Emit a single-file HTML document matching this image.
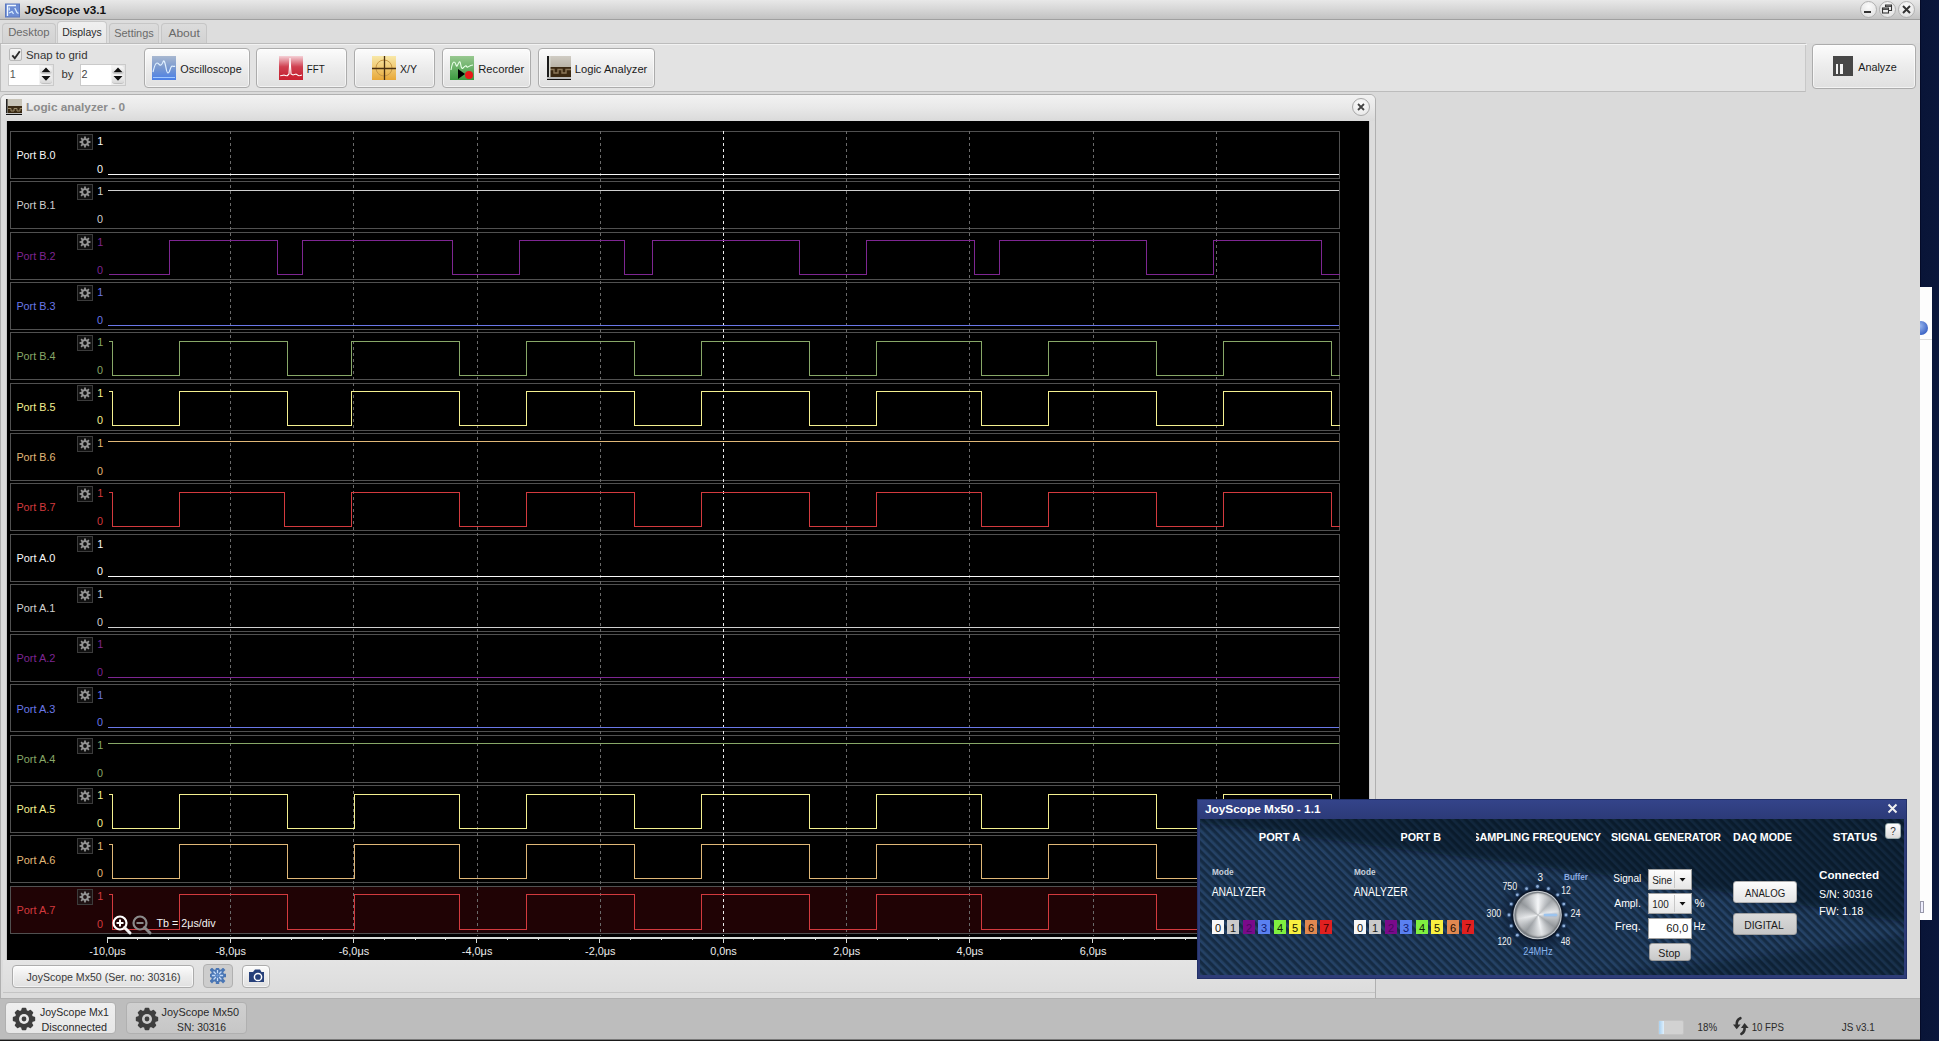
<!DOCTYPE html>
<html><head><meta charset="utf-8">
<style>
*{margin:0;padding:0;box-sizing:border-box}
html,body{width:1939px;height:1041px;overflow:hidden;position:relative;background:#0a1038;font-family:"Liberation Sans",sans-serif;font-size:12px;color:#222}
.a{position:absolute}
.btn{position:absolute;border:1px solid #acacac;border-radius:4px;background:linear-gradient(#fcfcfc,#ececec 50%,#e0e0e0);box-shadow:inset 0 0 0 1px rgba(255,255,255,0.6)}
.tab{position:absolute;border:1px solid #c6c6c6;border-bottom:none;border-radius:4px 4px 0 0;background:linear-gradient(#dcdcdc,#d2d2d2)}
.spin{position:absolute;background:#fff;border:1px solid #cacaca}
svg text{font-family:"Liberation Sans",sans-serif}
</style></head><body>
<div class="a" style="left:1920px;top:0;width:19px;height:1041px;background:linear-gradient(90deg,#020620 0px,#091538 1.5px,#0a1639 60%,#0b173c)"></div>
<div class="a" style="left:1920px;top:287px;width:12px;height:633px;background:#fdfdfd"></div>
<div class="a" style="left:1920px;top:339px;width:12px;height:1px;background:#dcdcdc"></div>
<div class="a" style="left:1914px;top:321px;width:14px;height:14px;border-radius:50%;background:radial-gradient(circle at 40% 35%,#9ab8f0,#3a62c4 75%)"></div>
<div class="a" style="left:1920px;top:901px;width:4px;height:12px;border:1px solid #99a;background:#eef"></div>
<div class="a" style="left:0;top:0;width:1920px;height:1041px;background:#dadada"></div>
<div class="a" style="left:0;top:0;width:1920px;height:20px;background:linear-gradient(#e8e8e8,#d8d8d8 45%,#c2c2c2);border-bottom:1px solid #a0a0a0"></div>
<svg class="a" style="left:5px;top:3px" width="16" height="15"><rect x="0.5" y="1" width="14" height="13" fill="#6c8cd4"/><rect x="0.5" y="1" width="14" height="13" fill="none" stroke="#5a78c0" stroke-width="1"/><path d="M2.5 13V2.5H11" fill="none" stroke="#f0f8ff" stroke-width="1.3"/><path d="M4.2 4.5V7.5M4 10L7 8.5L8.5 11M9.8 5L12 9.5L13.5 10.5" fill="none" stroke="#d8ecff" stroke-width="1.3"/></svg>
<div class="a" style="left:1860px;top:1px;width:17px;height:17px;border-radius:50%;border:1px solid #b0b0b0;background:radial-gradient(circle at 50% 30%,#fbfbfb,#e6e6e6 70%,#d8d8d8)"></div>
<div class="a" style="left:1879px;top:1px;width:17px;height:17px;border-radius:50%;border:1px solid #b0b0b0;background:radial-gradient(circle at 50% 30%,#fbfbfb,#e6e6e6 70%,#d8d8d8)"></div>
<div class="a" style="left:1898px;top:1px;width:17px;height:17px;border-radius:50%;border:1px solid #b0b0b0;background:radial-gradient(circle at 50% 30%,#fbfbfb,#e6e6e6 70%,#d8d8d8)"></div>
<div class="a" style="left:1864px;top:11px;width:7px;height:2px;background:#333"></div>
<svg class="a" style="left:1881px;top:4px" width="12" height="10"><path d="M4.5 3V1H10.5V6.5H8" fill="none" stroke="#333" stroke-width="1.1"/><path d="M4.5 2.2H10.5" stroke="#333" stroke-width="1.3"/><rect x="1.5" y="4" width="6" height="5" fill="none" stroke="#333" stroke-width="1.1"/><path d="M1.5 5.2H7.5" stroke="#333" stroke-width="1.3"/></svg>
<svg class="a" style="left:1901px;top:4px" width="11" height="11"><path d="M2 2L9 9M9 2L2 9" stroke="#333" stroke-width="2"/></svg>
<div class="a" style="left:0;top:20px;width:1920px;height:23px;background:#dddddd"></div>
<div class="tab" style="left:2px;top:23px;width:54px;height:20px"></div>
<div class="tab" style="left:109px;top:23px;width:50px;height:20px"></div>
<div class="tab" style="left:161px;top:23px;width:46px;height:20px"></div>
<div class="tab" style="left:57px;top:21px;width:50px;height:23px;background:linear-gradient(#f0f0f0,#e6e6e6);border-color:#cacaca"></div>
<div class="a" style="left:0;top:43px;width:1806px;height:49px;background:#e3e3e3;border:1px solid #bcbcbc;border-right:1px solid #c8c8c8"></div>
<div class="a" style="left:1px;top:44px;width:1806px;height:1px;background:#f2f2f2"></div>
<div class="a" style="left:9px;top:48px;width:13px;height:13px;border:1px solid #b8b8b8;border-radius:2px;background:linear-gradient(#f6f6f6,#e2e2e2)"></div>
<svg class="a" style="left:10px;top:49px" width="12" height="12"><path d="M2.3 6.3L4.8 9.3L9.8 2.2" fill="none" stroke="#2a2a2a" stroke-width="1.9"/></svg>
<div class="spin" style="left:8px;top:64px;width:46px;height:22px"></div>
<div class="spin" style="left:80px;top:64px;width:46px;height:22px"></div>
<div class="a" style="left:39px;top:65px;width:14px;height:20px;background:linear-gradient(90deg,#f4f4f4,#e4e4e4)"></div>
<div class="a" style="left:40px;top:66px;width:12px;height:8px;border-radius:3px;background:linear-gradient(#fafafa,#dedede);border-bottom:1px solid #c8c8c8"></div>
<div class="a" style="left:40px;top:75px;width:12px;height:9px;border-radius:3px;background:linear-gradient(#f6f6f6,#d8d8d8);border-bottom:1px solid #c0c0c0"></div>
<svg class="a" style="left:39px;top:65px" width="14" height="20"><path d="M2.5 7.3L7 2.5L11.5 7.3Z M2.5 11L7 15.8L11.5 11Z" fill="#111"/></svg>
<div class="a" style="left:111px;top:65px;width:14px;height:20px;background:linear-gradient(90deg,#f4f4f4,#e4e4e4)"></div>
<div class="a" style="left:112px;top:66px;width:12px;height:8px;border-radius:3px;background:linear-gradient(#fafafa,#dedede);border-bottom:1px solid #c8c8c8"></div>
<div class="a" style="left:112px;top:75px;width:12px;height:9px;border-radius:3px;background:linear-gradient(#f6f6f6,#d8d8d8);border-bottom:1px solid #c0c0c0"></div>
<svg class="a" style="left:111px;top:65px" width="14" height="20"><path d="M2.5 7.3L7 2.5L11.5 7.3Z M2.5 11L7 15.8L11.5 11Z" fill="#111"/></svg>
<svg class="a" style="left:0px;top:0px;overflow:visible" width="1939" height="1041" font-family="Liberation Sans, sans-serif"><text x="24.5" y="13.8" font-size="11.5" fill="#111" font-weight="bold" textLength="81.5" lengthAdjust="spacingAndGlyphs" >JoyScope v3.1</text><text x="8.2" y="36.3" font-size="11.4" fill="#6a6a6a" textLength="41.4" lengthAdjust="spacingAndGlyphs" >Desktop</text><text x="62.2" y="35.7" font-size="11.4" fill="#2a2a2a" textLength="39.5" lengthAdjust="spacingAndGlyphs" >Displays</text><text x="114.2" y="37" font-size="11.4" fill="#6a6a6a" textLength="39.6" lengthAdjust="spacingAndGlyphs" >Settings</text><text x="168.4" y="37" font-size="11.4" fill="#6a6a6a" textLength="31.4" lengthAdjust="spacingAndGlyphs" >About</text><text x="26" y="58.8" font-size="10.8" fill="#333" textLength="61.5" lengthAdjust="spacingAndGlyphs" >Snap to grid</text><text x="9.8" y="77.8" font-size="10.8" fill="#555" >1</text><text x="81.6" y="77.8" font-size="10.8" fill="#444" >2</text><text x="61.5" y="77.8" font-size="10.8" fill="#333" textLength="12" lengthAdjust="spacingAndGlyphs" >by</text></svg>
<div class="btn" style="left:144px;top:48px;width:106px;height:40px"></div>
<svg class="a" style="left:152px;top:56px" width="24" height="24"><defs><linearGradient id="go" x1="0" y1="0" x2="0" y2="1"><stop offset="0" stop-color="#a8b8d0"/><stop offset="0.5" stop-color="#7898d0"/><stop offset="1" stop-color="#4a80e8"/></linearGradient></defs><rect width="24" height="24" fill="url(#go)"/><path d="M1 16 C2 12 3 7 5 7 C7 7 7 10 9 9 C11 8 11 4 12 5 C14 7 14 17 16 17 C18 17 18 11 20 10 C21 10 22 11 23 10" fill="none" stroke="#e0f0ff" stroke-width="1.2"/><rect x="1" y="21" width="22" height="1" fill="#a0c8ff"/></svg>
<div class="btn" style="left:256px;top:48px;width:91px;height:40px"></div>
<svg class="a" style="left:279px;top:56px" width="24" height="24"><defs><linearGradient id="gf" x1="0" y1="0" x2="0" y2="1"><stop offset="0" stop-color="#f4d0d6"/><stop offset="0.45" stop-color="#d04050"/><stop offset="1" stop-color="#c01828"/></linearGradient></defs><rect width="24" height="24" fill="url(#gf)"/><path d="M1 20 L5 19 L8 20 L10 18 L11 2 L12 18 L14 19 L17 18 L20 20 L23 19" fill="none" stroke="#fff" stroke-width="1.1"/><rect x="0" y="20" width="24" height="4" fill="#d02838" opacity="0.6"/></svg>
<div class="btn" style="left:354px;top:48px;width:81px;height:40px"></div>
<svg class="a" style="left:372px;top:56px" width="24" height="24"><defs><linearGradient id="gx" x1="0" y1="0" x2="0" y2="1"><stop offset="0" stop-color="#f8e8a8"/><stop offset="1" stop-color="#e8a838"/></linearGradient></defs><rect width="24" height="24" fill="url(#gx)"/><circle cx="12" cy="12" r="8" fill="none" stroke="#c89848" stroke-width="1"/><path d="M0 12.5H24M12.5 0V24" stroke="#4a3010" stroke-width="1.3"/></svg>
<div class="btn" style="left:442px;top:48px;width:89px;height:40px"></div>
<svg class="a" style="left:450px;top:56px" width="24" height="24"><defs><linearGradient id="gr" x1="0" y1="0" x2="0" y2="1"><stop offset="0" stop-color="#98c890"/><stop offset="1" stop-color="#3c9a40"/></linearGradient></defs><rect width="24" height="24" fill="url(#gr)"/><path d="M1 14 C2 8 3 6 4 6 C6 6 6 11 7 10 C8 9 9 5 10 6 C11 8 11 14 13 12 C15 10 16 9 17 11 C18 12 19 9 23 9" fill="none" stroke="#e8ffe8" stroke-width="1.1"/><path d="M8 13 L15 18 L8 23Z" fill="#000"/><circle cx="19" cy="19" r="4" fill="#e81818"/></svg>
<div class="btn" style="left:538px;top:48px;width:117px;height:40px"></div>
<svg class="a" style="left:547px;top:56px" width="24" height="24"><defs><linearGradient id="gl" x1="0" y1="0" x2="0" y2="1"><stop offset="0" stop-color="#d0ccc4"/><stop offset="1" stop-color="#a09888"/></linearGradient></defs><rect width="24" height="24" fill="url(#gl)"/><rect x="3" y="11" width="21" height="10" fill="#3a2812"/><path d="M3 13.5H7V17H11V13.5H15V17H19V13.5H24" fill="none" stroke="#8a7658" stroke-width="1.4"/><rect x="0" y="0" width="2" height="24" fill="#1a1a1a"/><rect x="2" y="0" width="1.5" height="21" fill="#d8d8d0"/><rect x="0" y="21" width="24" height="2" fill="#b8b8b8"/><rect x="0" y="23" width="24" height="1" fill="#101010"/></svg>
<div class="btn" style="left:1812px;top:44px;width:104px;height:45px"></div>
<div class="a" style="left:1833px;top:56px;width:20px;height:20px;background:#474747"></div>
<div class="a" style="left:1836px;top:64px;width:2px;height:10px;background:#f4f4f4"></div>
<div class="a" style="left:1840px;top:64px;width:3px;height:10px;background:#f4f4f4"></div>
<svg class="a" style="left:0px;top:0px;overflow:visible" width="1939" height="1041" font-family="Liberation Sans, sans-serif"><text x="180.2" y="73" font-size="11.4" fill="#1a1a1a" textLength="61.5" lengthAdjust="spacingAndGlyphs" >Oscilloscope</text><text x="306.8" y="73" font-size="11.4" fill="#1a1a1a" textLength="18" lengthAdjust="spacingAndGlyphs" >FFT</text><text x="400" y="73" font-size="11.4" fill="#1a1a1a" textLength="17" lengthAdjust="spacingAndGlyphs" >X/Y</text><text x="478.3" y="73" font-size="11.4" fill="#1a1a1a" textLength="46" lengthAdjust="spacingAndGlyphs" >Recorder</text><text x="574.8" y="73" font-size="11.4" fill="#1a1a1a" textLength="72.5" lengthAdjust="spacingAndGlyphs" >Logic Analyzer</text><text x="1858.2" y="70.6" font-size="11" fill="#1a1a1a" textLength="38.5" lengthAdjust="spacingAndGlyphs" >Analyze</text></svg>
<div class="a" style="left:0;top:94px;width:1376px;height:905px;background:#dcdcdc;border:1px solid #b0b0b0;border-radius:6px 6px 0 0"></div>
<div class="a" style="left:6px;top:121px;width:1px;height:872px;background:#c8c8c8"></div>
<div class="a" style="left:1369px;top:121px;width:1px;height:872px;background:#c8c8c8"></div>
<div class="a" style="left:1px;top:95px;width:1374px;height:26px;border-radius:5px 5px 0 0;background:linear-gradient(#f2f2f2,#e8e8e8 50%,#dadada)"></div>
<svg class="a" style="left:6px;top:99px" width="16" height="16"><rect width="16" height="16" fill="#b8b2a4"/><rect x="2" y="0" width="14" height="7" fill="#c8c4b8"/><rect x="2" y="7" width="14" height="7" fill="#3a2a14"/><path d="M2 9.5H5V12H8V9.5H11V12H14V9.5H16" fill="none" stroke="#9a8a6a" stroke-width="1"/><rect x="0" y="0" width="1.5" height="16" fill="#222"/><rect y="14" width="16" height="1" fill="#c0c0c0"/><rect y="15" width="16" height="1" fill="#111"/></svg>
<div class="a" style="left:1352px;top:98px;width:18px;height:18px;border-radius:50%;border:1px solid #a8a8a8;background:radial-gradient(circle at 50% 35%,#fdfdfd,#e4e4e4)"></div>
<svg class="a" style="left:1355px;top:101px" width="12" height="12"><path d="M3 3L9 9M9 3L3 9" stroke="#444" stroke-width="1.8"/></svg>
<div class="a" style="left:7px;top:121px;width:1362px;height:839px;background:#000"></div>
<svg class="a" style="left:0;top:0" width="1400" height="1000" shape-rendering="crispEdges">
<rect x="10.5" y="131.5" width="1329" height="47" fill="none" stroke="#505050" stroke-width="1"/>
<rect x="10.5" y="181.5" width="1329" height="47" fill="none" stroke="#505050" stroke-width="1"/>
<rect x="10.5" y="232.5" width="1329" height="47" fill="none" stroke="#505050" stroke-width="1"/>
<rect x="10.5" y="282.5" width="1329" height="47" fill="none" stroke="#505050" stroke-width="1"/>
<rect x="10.5" y="332.5" width="1329" height="47" fill="none" stroke="#505050" stroke-width="1"/>
<rect x="10.5" y="383.5" width="1329" height="47" fill="none" stroke="#505050" stroke-width="1"/>
<rect x="10.5" y="433.5" width="1329" height="47" fill="none" stroke="#505050" stroke-width="1"/>
<rect x="10.5" y="483.5" width="1329" height="47" fill="none" stroke="#505050" stroke-width="1"/>
<rect x="10.5" y="534.5" width="1329" height="47" fill="none" stroke="#505050" stroke-width="1"/>
<rect x="10.5" y="584.5" width="1329" height="47" fill="none" stroke="#505050" stroke-width="1"/>
<rect x="10.5" y="634.5" width="1329" height="47" fill="none" stroke="#505050" stroke-width="1"/>
<rect x="10.5" y="684.5" width="1329" height="47" fill="none" stroke="#505050" stroke-width="1"/>
<rect x="10.5" y="735.5" width="1329" height="47" fill="none" stroke="#505050" stroke-width="1"/>
<rect x="10.5" y="785.5" width="1329" height="47" fill="none" stroke="#505050" stroke-width="1"/>
<rect x="10.5" y="835.5" width="1329" height="47" fill="none" stroke="#505050" stroke-width="1"/>
<rect x="10" y="886" width="1330" height="47" fill="#200305"/>
<rect x="10.5" y="886.5" width="1329" height="47" fill="none" stroke="#505050" stroke-width="1"/>
<line x1="230.5" y1="131" x2="230.5" y2="936" stroke="#6a6a6a" stroke-width="1" stroke-dasharray="3,3"/>
<line x1="353.5" y1="131" x2="353.5" y2="936" stroke="#6a6a6a" stroke-width="1" stroke-dasharray="3,3"/>
<line x1="477.5" y1="131" x2="477.5" y2="936" stroke="#6a6a6a" stroke-width="1" stroke-dasharray="3,3"/>
<line x1="600.5" y1="131" x2="600.5" y2="936" stroke="#6a6a6a" stroke-width="1" stroke-dasharray="3,3"/>
<line x1="723.5" y1="131" x2="723.5" y2="936" stroke="#ececec" stroke-width="1" stroke-dasharray="3,3"/>
<line x1="846.5" y1="131" x2="846.5" y2="936" stroke="#6a6a6a" stroke-width="1" stroke-dasharray="3,3"/>
<line x1="969.5" y1="131" x2="969.5" y2="936" stroke="#6a6a6a" stroke-width="1" stroke-dasharray="3,3"/>
<line x1="1093.5" y1="131" x2="1093.5" y2="936" stroke="#6a6a6a" stroke-width="1" stroke-dasharray="3,3"/>
<line x1="1216.5" y1="131" x2="1216.5" y2="936" stroke="#6a6a6a" stroke-width="1" stroke-dasharray="3,3"/>
<line x1="108" y1="174.5" x2="1339" y2="174.5" stroke="#f8f8f8" stroke-width="1.6"/>
<line x1="108" y1="190.5" x2="1339" y2="190.5" stroke="#d0d0d0" stroke-width="1.2"/>
<polyline points="108.5,274.5 169.5,274.5 169.5,240.5 277.5,240.5 277.5,274.5 302.5,274.5 302.5,240.5 452.5,240.5 452.5,274.5 519.5,274.5 519.5,240.5 624.5,240.5 624.5,274.5 652.5,274.5 652.5,240.5 799.5,240.5 799.5,274.5 866.5,274.5 866.5,240.5 974.5,240.5 974.5,274.5 999.5,274.5 999.5,240.5 1146.5,240.5 1146.5,274.5 1213.5,274.5 1213.5,240.5 1321.5,240.5 1321.5,274.5 1339.5,274.5" fill="none" stroke="#7e2692" stroke-width="1.2"/>
<line x1="108" y1="325.5" x2="1339" y2="325.5" stroke="#6a78e8" stroke-width="1.6"/>
<polyline points="108.5,341.5 112.5,341.5 112.5,375.5 179.5,375.5 179.5,341.5 287.5,341.5 287.5,375.5 351.5,375.5 351.5,341.5 459.5,341.5 459.5,375.5 526.5,375.5 526.5,341.5 634.5,341.5 634.5,375.5 701.5,375.5 701.5,341.5 809.5,341.5 809.5,375.5 876.5,375.5 876.5,341.5 981.5,341.5 981.5,375.5 1048.5,375.5 1048.5,341.5 1156.5,341.5 1156.5,375.5 1223.5,375.5 1223.5,341.5 1331.5,341.5 1331.5,375.5 1339.5,375.5" fill="none" stroke="#88a868" stroke-width="1.2"/>
<polyline points="108.5,391.5 112.5,391.5 112.5,425.5 179.5,425.5 179.5,391.5 287.5,391.5 287.5,425.5 351.5,425.5 351.5,391.5 459.5,391.5 459.5,425.5 526.5,425.5 526.5,391.5 634.5,391.5 634.5,425.5 701.5,425.5 701.5,391.5 809.5,391.5 809.5,425.5 876.5,425.5 876.5,391.5 981.5,391.5 981.5,425.5 1048.5,425.5 1048.5,391.5 1156.5,391.5 1156.5,425.5 1223.5,425.5 1223.5,391.5 1331.5,391.5 1331.5,425.5 1339.5,425.5" fill="none" stroke="#f4f090" stroke-width="1.2"/>
<line x1="108" y1="441.5" x2="1339" y2="441.5" stroke="#e0b878" stroke-width="1.2"/>
<polyline points="108.5,492.5 112.5,492.5 112.5,526.5 179.5,526.5 179.5,492.5 284.5,492.5 284.5,526.5 351.5,526.5 351.5,492.5 459.5,492.5 459.5,526.5 526.5,526.5 526.5,492.5 634.5,492.5 634.5,526.5 701.5,526.5 701.5,492.5 809.5,492.5 809.5,526.5 876.5,526.5 876.5,492.5 981.5,492.5 981.5,526.5 1048.5,526.5 1048.5,492.5 1156.5,492.5 1156.5,526.5 1223.5,526.5 1223.5,492.5 1331.5,492.5 1331.5,526.5 1339.5,526.5" fill="none" stroke="#d33a3e" stroke-width="1.2"/>
<line x1="108" y1="576.5" x2="1339" y2="576.5" stroke="#f8f8f8" stroke-width="1.6"/>
<line x1="108" y1="627.5" x2="1339" y2="627.5" stroke="#d0d0d0" stroke-width="1.6"/>
<line x1="108" y1="677.5" x2="1339" y2="677.5" stroke="#7e2692" stroke-width="1.6"/>
<line x1="108" y1="727.5" x2="1339" y2="727.5" stroke="#6a78e8" stroke-width="1.6"/>
<line x1="108" y1="743.5" x2="1339" y2="743.5" stroke="#88a868" stroke-width="1.2"/>
<polyline points="108.5,794.5 112.5,794.5 112.5,828.5 179.5,828.5 179.5,794.5 287.5,794.5 287.5,828.5 354.5,828.5 354.5,794.5 459.5,794.5 459.5,828.5 526.5,828.5 526.5,794.5 634.5,794.5 634.5,828.5 701.5,828.5 701.5,794.5 809.5,794.5 809.5,828.5 876.5,828.5 876.5,794.5 981.5,794.5 981.5,828.5 1048.5,828.5 1048.5,794.5 1156.5,794.5 1156.5,828.5 1223.5,828.5 1223.5,794.5 1331.5,794.5 1331.5,828.5 1339.5,828.5" fill="none" stroke="#f4f090" stroke-width="1.2"/>
<polyline points="108.5,844.5 112.5,844.5 112.5,878.5 179.5,878.5 179.5,844.5 287.5,844.5 287.5,878.5 354.5,878.5 354.5,844.5 459.5,844.5 459.5,878.5 526.5,878.5 526.5,844.5 634.5,844.5 634.5,878.5 701.5,878.5 701.5,844.5 809.5,844.5 809.5,878.5 876.5,878.5 876.5,844.5 981.5,844.5 981.5,878.5 1048.5,878.5 1048.5,844.5 1156.5,844.5 1156.5,878.5 1223.5,878.5 1223.5,844.5 1331.5,844.5 1331.5,878.5 1339.5,878.5" fill="none" stroke="#e0b878" stroke-width="1.2"/>
<polyline points="108.5,894.5 112.5,894.5 112.5,929.5 179.5,929.5 179.5,894.5 287.5,894.5 287.5,929.5 354.5,929.5 354.5,894.5 459.5,894.5 459.5,929.5 526.5,929.5 526.5,894.5 634.5,894.5 634.5,929.5 701.5,929.5 701.5,894.5 809.5,894.5 809.5,929.5 876.5,929.5 876.5,894.5 981.5,894.5 981.5,929.5 1048.5,929.5 1048.5,894.5 1156.5,894.5 1156.5,929.5 1223.5,929.5 1223.5,894.5 1331.5,894.5 1331.5,929.5 1339.5,929.5" fill="none" stroke="#d33a3e" stroke-width="1.2"/>
<rect x="107" y="937" width="1233" height="2" fill="#d8dcd8"/>
<rect x="107" y="937" width="1" height="6" fill="#d8dcd8"/>
<rect x="137" y="937" width="1" height="3" fill="#d8dcd8"/>
<rect x="168" y="937" width="1" height="3" fill="#d8dcd8"/>
<rect x="199" y="937" width="1" height="3" fill="#d8dcd8"/>
<rect x="230" y="937" width="1" height="6" fill="#d8dcd8"/>
<rect x="261" y="937" width="1" height="3" fill="#d8dcd8"/>
<rect x="291" y="937" width="1" height="3" fill="#d8dcd8"/>
<rect x="322" y="937" width="1" height="3" fill="#d8dcd8"/>
<rect x="353" y="937" width="1" height="6" fill="#d8dcd8"/>
<rect x="384" y="937" width="1" height="3" fill="#d8dcd8"/>
<rect x="415" y="937" width="1" height="3" fill="#d8dcd8"/>
<rect x="445" y="937" width="1" height="3" fill="#d8dcd8"/>
<rect x="476" y="937" width="1" height="6" fill="#d8dcd8"/>
<rect x="507" y="937" width="1" height="3" fill="#d8dcd8"/>
<rect x="538" y="937" width="1" height="3" fill="#d8dcd8"/>
<rect x="569" y="937" width="1" height="3" fill="#d8dcd8"/>
<rect x="599" y="937" width="1" height="6" fill="#d8dcd8"/>
<rect x="630" y="937" width="1" height="3" fill="#d8dcd8"/>
<rect x="661" y="937" width="1" height="3" fill="#d8dcd8"/>
<rect x="692" y="937" width="1" height="3" fill="#d8dcd8"/>
<rect x="723" y="937" width="1" height="6" fill="#d8dcd8"/>
<rect x="753" y="937" width="1" height="3" fill="#d8dcd8"/>
<rect x="784" y="937" width="1" height="3" fill="#d8dcd8"/>
<rect x="815" y="937" width="1" height="3" fill="#d8dcd8"/>
<rect x="846" y="937" width="1" height="6" fill="#d8dcd8"/>
<rect x="877" y="937" width="1" height="3" fill="#d8dcd8"/>
<rect x="907" y="937" width="1" height="3" fill="#d8dcd8"/>
<rect x="938" y="937" width="1" height="3" fill="#d8dcd8"/>
<rect x="969" y="937" width="1" height="6" fill="#d8dcd8"/>
<rect x="1000" y="937" width="1" height="3" fill="#d8dcd8"/>
<rect x="1031" y="937" width="1" height="3" fill="#d8dcd8"/>
<rect x="1061" y="937" width="1" height="3" fill="#d8dcd8"/>
<rect x="1092" y="937" width="1" height="6" fill="#d8dcd8"/>
<rect x="1123" y="937" width="1" height="3" fill="#d8dcd8"/>
<rect x="1154" y="937" width="1" height="3" fill="#d8dcd8"/>
<rect x="1185" y="937" width="1" height="3" fill="#d8dcd8"/>
<rect x="1215" y="937" width="1" height="6" fill="#d8dcd8"/>
<rect x="1246" y="937" width="1" height="3" fill="#d8dcd8"/>
<rect x="1277" y="937" width="1" height="3" fill="#d8dcd8"/>
<rect x="1308" y="937" width="1" height="3" fill="#d8dcd8"/>
<rect x="1339" y="937" width="1" height="6" fill="#d8dcd8"/>
</svg>
<svg class="a" style="left:77px;top:134px" width="16" height="16"><rect x="0.5" y="0.5" width="15" height="15" fill="rgba(30,30,30,0.55)" stroke="#3c3c3c"/><path d="M7.06 4.22 L7.17 2.46 L8.83 2.46 L8.94 4.22 L10.01 4.66 L11.33 3.50 L12.50 4.67 L11.34 5.99 L11.78 7.06 L13.54 7.17 L13.54 8.83 L11.78 8.94 L11.34 10.01 L12.50 11.33 L11.33 12.50 L10.01 11.34 L8.94 11.78 L8.83 13.54 L7.17 13.54 L7.06 11.78 L5.99 11.34 L4.67 12.50 L3.50 11.33 L4.66 10.01 L4.22 8.94 L2.46 8.83 L2.46 7.17 L4.22 7.06 L4.66 5.99 L3.50 4.67 L4.67 3.50 L5.99 4.66Z M9.90 8 A1.9 1.9 0 1 0 6.10 8 A1.9 1.9 0 1 0 9.90 8Z" fill="#959595" fill-rule="evenodd"/></svg>
<svg class="a" style="left:77px;top:184px" width="16" height="16"><rect x="0.5" y="0.5" width="15" height="15" fill="rgba(30,30,30,0.55)" stroke="#3c3c3c"/><path d="M7.06 4.22 L7.17 2.46 L8.83 2.46 L8.94 4.22 L10.01 4.66 L11.33 3.50 L12.50 4.67 L11.34 5.99 L11.78 7.06 L13.54 7.17 L13.54 8.83 L11.78 8.94 L11.34 10.01 L12.50 11.33 L11.33 12.50 L10.01 11.34 L8.94 11.78 L8.83 13.54 L7.17 13.54 L7.06 11.78 L5.99 11.34 L4.67 12.50 L3.50 11.33 L4.66 10.01 L4.22 8.94 L2.46 8.83 L2.46 7.17 L4.22 7.06 L4.66 5.99 L3.50 4.67 L4.67 3.50 L5.99 4.66Z M9.90 8 A1.9 1.9 0 1 0 6.10 8 A1.9 1.9 0 1 0 9.90 8Z" fill="#959595" fill-rule="evenodd"/></svg>
<svg class="a" style="left:77px;top:234px" width="16" height="16"><rect x="0.5" y="0.5" width="15" height="15" fill="rgba(30,30,30,0.55)" stroke="#3c3c3c"/><path d="M7.06 4.22 L7.17 2.46 L8.83 2.46 L8.94 4.22 L10.01 4.66 L11.33 3.50 L12.50 4.67 L11.34 5.99 L11.78 7.06 L13.54 7.17 L13.54 8.83 L11.78 8.94 L11.34 10.01 L12.50 11.33 L11.33 12.50 L10.01 11.34 L8.94 11.78 L8.83 13.54 L7.17 13.54 L7.06 11.78 L5.99 11.34 L4.67 12.50 L3.50 11.33 L4.66 10.01 L4.22 8.94 L2.46 8.83 L2.46 7.17 L4.22 7.06 L4.66 5.99 L3.50 4.67 L4.67 3.50 L5.99 4.66Z M9.90 8 A1.9 1.9 0 1 0 6.10 8 A1.9 1.9 0 1 0 9.90 8Z" fill="#959595" fill-rule="evenodd"/></svg>
<svg class="a" style="left:77px;top:285px" width="16" height="16"><rect x="0.5" y="0.5" width="15" height="15" fill="rgba(30,30,30,0.55)" stroke="#3c3c3c"/><path d="M7.06 4.22 L7.17 2.46 L8.83 2.46 L8.94 4.22 L10.01 4.66 L11.33 3.50 L12.50 4.67 L11.34 5.99 L11.78 7.06 L13.54 7.17 L13.54 8.83 L11.78 8.94 L11.34 10.01 L12.50 11.33 L11.33 12.50 L10.01 11.34 L8.94 11.78 L8.83 13.54 L7.17 13.54 L7.06 11.78 L5.99 11.34 L4.67 12.50 L3.50 11.33 L4.66 10.01 L4.22 8.94 L2.46 8.83 L2.46 7.17 L4.22 7.06 L4.66 5.99 L3.50 4.67 L4.67 3.50 L5.99 4.66Z M9.90 8 A1.9 1.9 0 1 0 6.10 8 A1.9 1.9 0 1 0 9.90 8Z" fill="#959595" fill-rule="evenodd"/></svg>
<svg class="a" style="left:77px;top:335px" width="16" height="16"><rect x="0.5" y="0.5" width="15" height="15" fill="rgba(30,30,30,0.55)" stroke="#3c3c3c"/><path d="M7.06 4.22 L7.17 2.46 L8.83 2.46 L8.94 4.22 L10.01 4.66 L11.33 3.50 L12.50 4.67 L11.34 5.99 L11.78 7.06 L13.54 7.17 L13.54 8.83 L11.78 8.94 L11.34 10.01 L12.50 11.33 L11.33 12.50 L10.01 11.34 L8.94 11.78 L8.83 13.54 L7.17 13.54 L7.06 11.78 L5.99 11.34 L4.67 12.50 L3.50 11.33 L4.66 10.01 L4.22 8.94 L2.46 8.83 L2.46 7.17 L4.22 7.06 L4.66 5.99 L3.50 4.67 L4.67 3.50 L5.99 4.66Z M9.90 8 A1.9 1.9 0 1 0 6.10 8 A1.9 1.9 0 1 0 9.90 8Z" fill="#959595" fill-rule="evenodd"/></svg>
<svg class="a" style="left:77px;top:385px" width="16" height="16"><rect x="0.5" y="0.5" width="15" height="15" fill="rgba(30,30,30,0.55)" stroke="#3c3c3c"/><path d="M7.06 4.22 L7.17 2.46 L8.83 2.46 L8.94 4.22 L10.01 4.66 L11.33 3.50 L12.50 4.67 L11.34 5.99 L11.78 7.06 L13.54 7.17 L13.54 8.83 L11.78 8.94 L11.34 10.01 L12.50 11.33 L11.33 12.50 L10.01 11.34 L8.94 11.78 L8.83 13.54 L7.17 13.54 L7.06 11.78 L5.99 11.34 L4.67 12.50 L3.50 11.33 L4.66 10.01 L4.22 8.94 L2.46 8.83 L2.46 7.17 L4.22 7.06 L4.66 5.99 L3.50 4.67 L4.67 3.50 L5.99 4.66Z M9.90 8 A1.9 1.9 0 1 0 6.10 8 A1.9 1.9 0 1 0 9.90 8Z" fill="#959595" fill-rule="evenodd"/></svg>
<svg class="a" style="left:77px;top:436px" width="16" height="16"><rect x="0.5" y="0.5" width="15" height="15" fill="rgba(30,30,30,0.55)" stroke="#3c3c3c"/><path d="M7.06 4.22 L7.17 2.46 L8.83 2.46 L8.94 4.22 L10.01 4.66 L11.33 3.50 L12.50 4.67 L11.34 5.99 L11.78 7.06 L13.54 7.17 L13.54 8.83 L11.78 8.94 L11.34 10.01 L12.50 11.33 L11.33 12.50 L10.01 11.34 L8.94 11.78 L8.83 13.54 L7.17 13.54 L7.06 11.78 L5.99 11.34 L4.67 12.50 L3.50 11.33 L4.66 10.01 L4.22 8.94 L2.46 8.83 L2.46 7.17 L4.22 7.06 L4.66 5.99 L3.50 4.67 L4.67 3.50 L5.99 4.66Z M9.90 8 A1.9 1.9 0 1 0 6.10 8 A1.9 1.9 0 1 0 9.90 8Z" fill="#959595" fill-rule="evenodd"/></svg>
<svg class="a" style="left:77px;top:486px" width="16" height="16"><rect x="0.5" y="0.5" width="15" height="15" fill="rgba(30,30,30,0.55)" stroke="#3c3c3c"/><path d="M7.06 4.22 L7.17 2.46 L8.83 2.46 L8.94 4.22 L10.01 4.66 L11.33 3.50 L12.50 4.67 L11.34 5.99 L11.78 7.06 L13.54 7.17 L13.54 8.83 L11.78 8.94 L11.34 10.01 L12.50 11.33 L11.33 12.50 L10.01 11.34 L8.94 11.78 L8.83 13.54 L7.17 13.54 L7.06 11.78 L5.99 11.34 L4.67 12.50 L3.50 11.33 L4.66 10.01 L4.22 8.94 L2.46 8.83 L2.46 7.17 L4.22 7.06 L4.66 5.99 L3.50 4.67 L4.67 3.50 L5.99 4.66Z M9.90 8 A1.9 1.9 0 1 0 6.10 8 A1.9 1.9 0 1 0 9.90 8Z" fill="#959595" fill-rule="evenodd"/></svg>
<svg class="a" style="left:77px;top:536px" width="16" height="16"><rect x="0.5" y="0.5" width="15" height="15" fill="rgba(30,30,30,0.55)" stroke="#3c3c3c"/><path d="M7.06 4.22 L7.17 2.46 L8.83 2.46 L8.94 4.22 L10.01 4.66 L11.33 3.50 L12.50 4.67 L11.34 5.99 L11.78 7.06 L13.54 7.17 L13.54 8.83 L11.78 8.94 L11.34 10.01 L12.50 11.33 L11.33 12.50 L10.01 11.34 L8.94 11.78 L8.83 13.54 L7.17 13.54 L7.06 11.78 L5.99 11.34 L4.67 12.50 L3.50 11.33 L4.66 10.01 L4.22 8.94 L2.46 8.83 L2.46 7.17 L4.22 7.06 L4.66 5.99 L3.50 4.67 L4.67 3.50 L5.99 4.66Z M9.90 8 A1.9 1.9 0 1 0 6.10 8 A1.9 1.9 0 1 0 9.90 8Z" fill="#959595" fill-rule="evenodd"/></svg>
<svg class="a" style="left:77px;top:587px" width="16" height="16"><rect x="0.5" y="0.5" width="15" height="15" fill="rgba(30,30,30,0.55)" stroke="#3c3c3c"/><path d="M7.06 4.22 L7.17 2.46 L8.83 2.46 L8.94 4.22 L10.01 4.66 L11.33 3.50 L12.50 4.67 L11.34 5.99 L11.78 7.06 L13.54 7.17 L13.54 8.83 L11.78 8.94 L11.34 10.01 L12.50 11.33 L11.33 12.50 L10.01 11.34 L8.94 11.78 L8.83 13.54 L7.17 13.54 L7.06 11.78 L5.99 11.34 L4.67 12.50 L3.50 11.33 L4.66 10.01 L4.22 8.94 L2.46 8.83 L2.46 7.17 L4.22 7.06 L4.66 5.99 L3.50 4.67 L4.67 3.50 L5.99 4.66Z M9.90 8 A1.9 1.9 0 1 0 6.10 8 A1.9 1.9 0 1 0 9.90 8Z" fill="#959595" fill-rule="evenodd"/></svg>
<svg class="a" style="left:77px;top:637px" width="16" height="16"><rect x="0.5" y="0.5" width="15" height="15" fill="rgba(30,30,30,0.55)" stroke="#3c3c3c"/><path d="M7.06 4.22 L7.17 2.46 L8.83 2.46 L8.94 4.22 L10.01 4.66 L11.33 3.50 L12.50 4.67 L11.34 5.99 L11.78 7.06 L13.54 7.17 L13.54 8.83 L11.78 8.94 L11.34 10.01 L12.50 11.33 L11.33 12.50 L10.01 11.34 L8.94 11.78 L8.83 13.54 L7.17 13.54 L7.06 11.78 L5.99 11.34 L4.67 12.50 L3.50 11.33 L4.66 10.01 L4.22 8.94 L2.46 8.83 L2.46 7.17 L4.22 7.06 L4.66 5.99 L3.50 4.67 L4.67 3.50 L5.99 4.66Z M9.90 8 A1.9 1.9 0 1 0 6.10 8 A1.9 1.9 0 1 0 9.90 8Z" fill="#959595" fill-rule="evenodd"/></svg>
<svg class="a" style="left:77px;top:687px" width="16" height="16"><rect x="0.5" y="0.5" width="15" height="15" fill="rgba(30,30,30,0.55)" stroke="#3c3c3c"/><path d="M7.06 4.22 L7.17 2.46 L8.83 2.46 L8.94 4.22 L10.01 4.66 L11.33 3.50 L12.50 4.67 L11.34 5.99 L11.78 7.06 L13.54 7.17 L13.54 8.83 L11.78 8.94 L11.34 10.01 L12.50 11.33 L11.33 12.50 L10.01 11.34 L8.94 11.78 L8.83 13.54 L7.17 13.54 L7.06 11.78 L5.99 11.34 L4.67 12.50 L3.50 11.33 L4.66 10.01 L4.22 8.94 L2.46 8.83 L2.46 7.17 L4.22 7.06 L4.66 5.99 L3.50 4.67 L4.67 3.50 L5.99 4.66Z M9.90 8 A1.9 1.9 0 1 0 6.10 8 A1.9 1.9 0 1 0 9.90 8Z" fill="#959595" fill-rule="evenodd"/></svg>
<svg class="a" style="left:77px;top:738px" width="16" height="16"><rect x="0.5" y="0.5" width="15" height="15" fill="rgba(30,30,30,0.55)" stroke="#3c3c3c"/><path d="M7.06 4.22 L7.17 2.46 L8.83 2.46 L8.94 4.22 L10.01 4.66 L11.33 3.50 L12.50 4.67 L11.34 5.99 L11.78 7.06 L13.54 7.17 L13.54 8.83 L11.78 8.94 L11.34 10.01 L12.50 11.33 L11.33 12.50 L10.01 11.34 L8.94 11.78 L8.83 13.54 L7.17 13.54 L7.06 11.78 L5.99 11.34 L4.67 12.50 L3.50 11.33 L4.66 10.01 L4.22 8.94 L2.46 8.83 L2.46 7.17 L4.22 7.06 L4.66 5.99 L3.50 4.67 L4.67 3.50 L5.99 4.66Z M9.90 8 A1.9 1.9 0 1 0 6.10 8 A1.9 1.9 0 1 0 9.90 8Z" fill="#959595" fill-rule="evenodd"/></svg>
<svg class="a" style="left:77px;top:788px" width="16" height="16"><rect x="0.5" y="0.5" width="15" height="15" fill="rgba(30,30,30,0.55)" stroke="#3c3c3c"/><path d="M7.06 4.22 L7.17 2.46 L8.83 2.46 L8.94 4.22 L10.01 4.66 L11.33 3.50 L12.50 4.67 L11.34 5.99 L11.78 7.06 L13.54 7.17 L13.54 8.83 L11.78 8.94 L11.34 10.01 L12.50 11.33 L11.33 12.50 L10.01 11.34 L8.94 11.78 L8.83 13.54 L7.17 13.54 L7.06 11.78 L5.99 11.34 L4.67 12.50 L3.50 11.33 L4.66 10.01 L4.22 8.94 L2.46 8.83 L2.46 7.17 L4.22 7.06 L4.66 5.99 L3.50 4.67 L4.67 3.50 L5.99 4.66Z M9.90 8 A1.9 1.9 0 1 0 6.10 8 A1.9 1.9 0 1 0 9.90 8Z" fill="#959595" fill-rule="evenodd"/></svg>
<svg class="a" style="left:77px;top:838px" width="16" height="16"><rect x="0.5" y="0.5" width="15" height="15" fill="rgba(30,30,30,0.55)" stroke="#3c3c3c"/><path d="M7.06 4.22 L7.17 2.46 L8.83 2.46 L8.94 4.22 L10.01 4.66 L11.33 3.50 L12.50 4.67 L11.34 5.99 L11.78 7.06 L13.54 7.17 L13.54 8.83 L11.78 8.94 L11.34 10.01 L12.50 11.33 L11.33 12.50 L10.01 11.34 L8.94 11.78 L8.83 13.54 L7.17 13.54 L7.06 11.78 L5.99 11.34 L4.67 12.50 L3.50 11.33 L4.66 10.01 L4.22 8.94 L2.46 8.83 L2.46 7.17 L4.22 7.06 L4.66 5.99 L3.50 4.67 L4.67 3.50 L5.99 4.66Z M9.90 8 A1.9 1.9 0 1 0 6.10 8 A1.9 1.9 0 1 0 9.90 8Z" fill="#959595" fill-rule="evenodd"/></svg>
<svg class="a" style="left:77px;top:889px" width="16" height="16"><rect x="0.5" y="0.5" width="15" height="15" fill="rgba(30,30,30,0.55)" stroke="#3c3c3c"/><path d="M7.06 4.22 L7.17 2.46 L8.83 2.46 L8.94 4.22 L10.01 4.66 L11.33 3.50 L12.50 4.67 L11.34 5.99 L11.78 7.06 L13.54 7.17 L13.54 8.83 L11.78 8.94 L11.34 10.01 L12.50 11.33 L11.33 12.50 L10.01 11.34 L8.94 11.78 L8.83 13.54 L7.17 13.54 L7.06 11.78 L5.99 11.34 L4.67 12.50 L3.50 11.33 L4.66 10.01 L4.22 8.94 L2.46 8.83 L2.46 7.17 L4.22 7.06 L4.66 5.99 L3.50 4.67 L4.67 3.50 L5.99 4.66Z M9.90 8 A1.9 1.9 0 1 0 6.10 8 A1.9 1.9 0 1 0 9.90 8Z" fill="#959595" fill-rule="evenodd"/></svg>
<svg class="a" style="left:108px;top:912px" width="48" height="24"><circle cx="12" cy="11" r="6.5" fill="none" stroke="#fff" stroke-width="2.2"/><path d="M8.5 11H15.5M12 7.5V14.5" stroke="#fff" stroke-width="2"/><path d="M16.5 15.5L22 21" stroke="#f2f2f2" stroke-width="3" stroke-linecap="round"/><circle cx="32" cy="11" r="6.5" fill="none" stroke="#8a8a8a" stroke-width="2.2"/><path d="M28.5 11H35.5" stroke="#8a8a8a" stroke-width="2"/><path d="M36.5 15.5L42 21" stroke="#8a8a8a" stroke-width="3" stroke-linecap="round"/></svg>
<svg class="a" style="left:0px;top:0px;overflow:visible" width="1939" height="1041" font-family="Liberation Sans, sans-serif"><text x="26" y="111" font-size="10.8" fill="#8c8c8c" font-weight="bold" textLength="99" lengthAdjust="spacingAndGlyphs" >Logic analyzer - 0</text><text x="16.4" y="159.0" font-size="10.8" fill="#f8f8f8" textLength="39" lengthAdjust="spacingAndGlyphs" >Port B.0</text><text x="97.2" y="145.0" font-size="10.8" fill="#f8f8f8" >1</text><text x="97" y="172.8" font-size="10.8" fill="#f8f8f8" >0</text><text x="16.4" y="209.3" font-size="10.8" fill="#d0d0d0" textLength="39" lengthAdjust="spacingAndGlyphs" >Port B.1</text><text x="97.2" y="195.3" font-size="10.8" fill="#d0d0d0" >1</text><text x="97" y="223.1" font-size="10.8" fill="#d0d0d0" >0</text><text x="16.4" y="259.7" font-size="10.8" fill="#7e2692" textLength="39" lengthAdjust="spacingAndGlyphs" >Port B.2</text><text x="97.2" y="245.7" font-size="10.8" fill="#7e2692" >1</text><text x="97" y="273.5" font-size="10.8" fill="#7e2692" >0</text><text x="16.4" y="310.0" font-size="10.8" fill="#6a78e8" textLength="39" lengthAdjust="spacingAndGlyphs" >Port B.3</text><text x="97.2" y="296.0" font-size="10.8" fill="#6a78e8" >1</text><text x="97" y="323.8" font-size="10.8" fill="#6a78e8" >0</text><text x="16.4" y="360.3" font-size="10.8" fill="#88a868" textLength="39" lengthAdjust="spacingAndGlyphs" >Port B.4</text><text x="97.2" y="346.3" font-size="10.8" fill="#88a868" >1</text><text x="97" y="374.1" font-size="10.8" fill="#88a868" >0</text><text x="16.4" y="410.6" font-size="10.8" fill="#f4f090" textLength="39" lengthAdjust="spacingAndGlyphs" >Port B.5</text><text x="97.2" y="396.6" font-size="10.8" fill="#f4f090" >1</text><text x="97" y="424.4" font-size="10.8" fill="#f4f090" >0</text><text x="16.4" y="461.0" font-size="10.8" fill="#e0b878" textLength="39" lengthAdjust="spacingAndGlyphs" >Port B.6</text><text x="97.2" y="447.0" font-size="10.8" fill="#e0b878" >1</text><text x="97" y="474.8" font-size="10.8" fill="#e0b878" >0</text><text x="16.4" y="511.3" font-size="10.8" fill="#d33a3e" textLength="39" lengthAdjust="spacingAndGlyphs" >Port B.7</text><text x="97.2" y="497.3" font-size="10.8" fill="#d33a3e" >1</text><text x="97" y="525.1" font-size="10.8" fill="#d33a3e" >0</text><text x="16.4" y="561.6" font-size="10.8" fill="#f8f8f8" textLength="39" lengthAdjust="spacingAndGlyphs" >Port A.0</text><text x="97.2" y="547.6" font-size="10.8" fill="#f8f8f8" >1</text><text x="97" y="575.4" font-size="10.8" fill="#f8f8f8" >0</text><text x="16.4" y="612.0" font-size="10.8" fill="#d0d0d0" textLength="39" lengthAdjust="spacingAndGlyphs" >Port A.1</text><text x="97.2" y="598.0" font-size="10.8" fill="#d0d0d0" >1</text><text x="97" y="625.8" font-size="10.8" fill="#d0d0d0" >0</text><text x="16.4" y="662.3" font-size="10.8" fill="#7e2692" textLength="39" lengthAdjust="spacingAndGlyphs" >Port A.2</text><text x="97.2" y="648.3" font-size="10.8" fill="#7e2692" >1</text><text x="97" y="676.1" font-size="10.8" fill="#7e2692" >0</text><text x="16.4" y="712.6" font-size="10.8" fill="#6a78e8" textLength="39" lengthAdjust="spacingAndGlyphs" >Port A.3</text><text x="97.2" y="698.6" font-size="10.8" fill="#6a78e8" >1</text><text x="97" y="726.4" font-size="10.8" fill="#6a78e8" >0</text><text x="16.4" y="763.0" font-size="10.8" fill="#88a868" textLength="39" lengthAdjust="spacingAndGlyphs" >Port A.4</text><text x="97.2" y="749.0" font-size="10.8" fill="#88a868" >1</text><text x="97" y="776.8" font-size="10.8" fill="#88a868" >0</text><text x="16.4" y="813.3" font-size="10.8" fill="#f4f090" textLength="39" lengthAdjust="spacingAndGlyphs" >Port A.5</text><text x="97.2" y="799.3" font-size="10.8" fill="#f4f090" >1</text><text x="97" y="827.1" font-size="10.8" fill="#f4f090" >0</text><text x="16.4" y="863.6" font-size="10.8" fill="#e0b878" textLength="39" lengthAdjust="spacingAndGlyphs" >Port A.6</text><text x="97.2" y="849.6" font-size="10.8" fill="#e0b878" >1</text><text x="97" y="877.4" font-size="10.8" fill="#e0b878" >0</text><text x="16.4" y="913.9" font-size="10.8" fill="#d33a3e" textLength="39" lengthAdjust="spacingAndGlyphs" >Port A.7</text><text x="97.2" y="899.9" font-size="10.8" fill="#d33a3e" >1</text><text x="97" y="927.8" font-size="10.8" fill="#d33a3e" >0</text><text x="107.5" y="954.9" font-size="10.9" fill="#ececec" text-anchor="middle" >-10,0μs</text><text x="230.7" y="954.9" font-size="10.9" fill="#ececec" text-anchor="middle" >-8,0μs</text><text x="353.9" y="954.9" font-size="10.9" fill="#ececec" text-anchor="middle" >-6,0μs</text><text x="477.1" y="954.9" font-size="10.9" fill="#ececec" text-anchor="middle" >-4,0μs</text><text x="600.3" y="954.9" font-size="10.9" fill="#ececec" text-anchor="middle" >-2,0μs</text><text x="723.5" y="954.9" font-size="10.9" fill="#ececec" text-anchor="middle" >0,0ns</text><text x="846.7" y="954.9" font-size="10.9" fill="#ececec" text-anchor="middle" >2,0μs</text><text x="969.9" y="954.9" font-size="10.9" fill="#ececec" text-anchor="middle" >4,0μs</text><text x="1093.1" y="954.9" font-size="10.9" fill="#ececec" text-anchor="middle" >6,0μs</text><text x="1216.3" y="954.9" font-size="10.9" fill="#ececec" text-anchor="middle" >8,0μs</text><text x="1339.5" y="954.9" font-size="10.9" fill="#ececec" text-anchor="middle" >10,0μs</text><text x="156.5" y="926.9" font-size="10.5" fill="#f4f4f4" textLength="59" lengthAdjust="spacingAndGlyphs" >Tb = 2μs/div</text></svg>
<div class="a" style="left:3px;top:960px;width:1372px;height:33px;background:linear-gradient(#e4e4e4,#dcdcdc)"></div>
<div class="a" style="left:3px;top:992px;width:1372px;height:1px;background:#c4c4c4"></div>
<div class="btn" style="left:12px;top:965px;width:182px;height:23px"></div>
<svg class="a" style="left:0px;top:0px;overflow:visible" width="1939" height="1041" font-family="Liberation Sans, sans-serif"><text x="26.5" y="980.6" font-size="10.8" fill="#3a3a3a" textLength="154" lengthAdjust="spacingAndGlyphs" >JoyScope Mx50 (Ser. no: 30316)</text></svg>
<div class="a" style="left:203px;top:964px;width:30px;height:24px;border:1px solid #b0b0b0;border-radius:4px;background:#cdcdcd"></div>
<svg class="a" style="left:209.5px;top:968px" width="16" height="16"><circle cx="7.5" cy="7.5" r="6.6" fill="#4a76b4"/><path d="M7.50 7.50L14.70 7.50M7.50 7.50L13.02 13.02M7.50 7.50L7.50 14.70M7.50 7.50L1.98 13.02M7.50 7.50L0.30 7.50M7.50 7.50L1.98 1.98M7.50 7.50L7.50 0.30M7.50 7.50L13.02 1.98" stroke="#4a76b4" stroke-width="3.4" stroke-linecap="square"/><path d="M9.70 7.50L13.10 7.50M9.06 9.06L11.46 11.46M7.50 9.70L7.50 13.10M5.94 9.06L3.54 11.46M5.30 7.50L1.90 7.50M5.94 5.94L3.54 3.54M7.50 5.30L7.50 1.90M9.06 5.94L11.46 3.54" stroke="#c4daf8" stroke-width="1.3"/><circle cx="7.5" cy="7.5" r="1.3" fill="#6a98d8"/></svg>
<div class="btn" style="left:242px;top:965px;width:28px;height:23px"></div>
<svg class="a" style="left:248px;top:969px" width="17" height="14"><path d="M1 3H5L7 0.5H12L13.5 3H16V13H1Z" fill="#27407a"/><circle cx="10" cy="8" r="3.6" fill="none" stroke="#fff" stroke-width="1.5"/><circle cx="10" cy="8" r="1.6" fill="#27407a"/></svg>
<div class="a" style="left:0;top:998px;width:1920px;height:43px;background:#bdbdbd"></div>
<div class="a" style="left:0;top:998px;width:1920px;height:1px;background:#b0b0b0"></div>
<div class="a" style="left:0;top:1039px;width:1920px;height:1px;background:#7a7a7a"></div>
<div class="a" style="left:0;top:1040px;width:1920px;height:1px;background:#1a1a1a"></div>
<div class="a" style="left:5px;top:1002px;width:111px;height:32px;border:1px solid #b0b0b0;border-radius:4px;background:linear-gradient(#efefef,#e6e6e6)"></div>
<svg class="a" style="left:12.4px;top:1007px" width="24" height="24" viewBox="0 0 24 24"><path d="M9.90 4.07 L10.53 1.70 L13.47 1.70 L14.10 4.07 L16.12 4.91 L18.24 3.68 L20.32 5.76 L19.09 7.88 L19.93 9.90 L22.30 10.53 L22.30 13.47 L19.93 14.10 L19.09 16.12 L20.32 18.24 L18.24 20.32 L16.12 19.09 L14.10 19.93 L13.47 22.30 L10.53 22.30 L9.90 19.93 L7.88 19.09 L5.76 20.32 L3.68 18.24 L4.91 16.12 L4.07 14.10 L1.70 13.47 L1.70 10.53 L4.07 9.90 L4.91 7.88 L3.68 5.76 L5.76 3.68 L7.88 4.91Z" fill="#3e3e3e" stroke="#3e3e3e" stroke-width="1.8" stroke-linejoin="round"/><circle cx="12" cy="12" r="5" fill="#eaeaea"/><circle cx="12" cy="12" r="2.4" fill="#3e3e3e"/></svg>
<div class="a" style="left:126px;top:1002px;width:121px;height:32px;border:1px solid #b0b0b0;border-radius:4px;background:linear-gradient(#d0d0d0,#c6c6c6)"></div>
<svg class="a" style="left:134.7px;top:1007px" width="24" height="24" viewBox="0 0 24 24"><path d="M9.90 4.07 L10.53 1.70 L13.47 1.70 L14.10 4.07 L16.12 4.91 L18.24 3.68 L20.32 5.76 L19.09 7.88 L19.93 9.90 L22.30 10.53 L22.30 13.47 L19.93 14.10 L19.09 16.12 L20.32 18.24 L18.24 20.32 L16.12 19.09 L14.10 19.93 L13.47 22.30 L10.53 22.30 L9.90 19.93 L7.88 19.09 L5.76 20.32 L3.68 18.24 L4.91 16.12 L4.07 14.10 L1.70 13.47 L1.70 10.53 L4.07 9.90 L4.91 7.88 L3.68 5.76 L5.76 3.68 L7.88 4.91Z" fill="#3e3e3e" stroke="#3e3e3e" stroke-width="1.8" stroke-linejoin="round"/><circle cx="12" cy="12" r="5" fill="#cccccc"/><circle cx="12" cy="12" r="2.4" fill="#3e3e3e"/></svg>
<div class="a" style="left:1658px;top:1020px;width:26px;height:15px;background:#d2d2d2;border:1px solid #c4c4c4;border-radius:2px"></div>
<div class="a" style="left:1659px;top:1021px;width:5px;height:13px;background:linear-gradient(90deg,#a8d0f0,#e0f0fc)"></div>
<svg class="a" style="left:1728px;top:1014px" width="28" height="24"><path d="M12.4 4.2C9.6 5.4 8.5 7.6 8.7 10.8" fill="none" stroke="#303030" stroke-width="2.6" stroke-linecap="round"/><path d="M5 10.4H12.6L8.7 15.2Z" fill="#303030"/><path d="M16.6 13.5C16.8 16.5 15.6 18.6 13.4 19.8" fill="none" stroke="#303030" stroke-width="2.6" stroke-linecap="round"/><path d="M13 13.9H20.6L16.6 9Z" fill="#303030"/></svg>
<svg class="a" style="left:0px;top:0px;overflow:visible" width="1939" height="1041" font-family="Liberation Sans, sans-serif"><text x="40" y="1015.7" font-size="10.8" fill="#2a2a2a" textLength="68.8" lengthAdjust="spacingAndGlyphs" >JoyScope Mx1</text><text x="41.5" y="1030.6" font-size="10.8" fill="#2a2a2a" textLength="65.5" lengthAdjust="spacingAndGlyphs" >Disconnected</text><text x="161.6" y="1016.2" font-size="10.8" fill="#2a2a2a" textLength="77.5" lengthAdjust="spacingAndGlyphs" >JoyScope Mx50</text><text x="177" y="1030.6" font-size="10.8" fill="#2a2a2a" textLength="49" lengthAdjust="spacingAndGlyphs" >SN: 30316</text><text x="1697.6" y="1031" font-size="10" fill="#2a2a2a" textLength="19.5" lengthAdjust="spacingAndGlyphs" >18%</text><text x="1751.7" y="1031" font-size="10" fill="#2a2a2a" textLength="32.2" lengthAdjust="spacingAndGlyphs" >10 FPS</text><text x="1841.7" y="1031" font-size="10" fill="#2a2a2a" textLength="33" lengthAdjust="spacingAndGlyphs" >JS v3.1</text></svg>
<div class="a" style="left:1197px;top:799px;width:710px;height:180px;background:#2e3c78;border:1px solid #223068"></div>
<div class="a" style="left:1198px;top:800px;width:708px;height:19px;background:linear-gradient(#34448a,#2c3a78)"></div>
<svg class="a" style="left:1887px;top:803px" width="12" height="11"><path d="M1.5 1.5L9.5 9.5M9.5 1.5L1.5 9.5" stroke="#f0f0f0" stroke-width="2"/></svg>
<div class="a" style="left:1200px;top:819px;width:704px;height:156px;overflow:hidden;background:repeating-linear-gradient(45deg,#26436a 0px,#23405f 1.4px,#162c46 2.9px,#142a42 4.6px,#26436a 6px)"><svg class="a" style="left:0;top:0" width="704" height="156"><defs><filter id="wb" x="-20%" y="-50%" width="140%" height="200%"><feGaussianBlur stdDeviation="3.5"/></filter></defs><path d="M-20 -20 H730 V108 C660 96 600 86 520 73 C420 58 330 46 220 33 C130 22 60 10 -20 2Z" fill="#000814" opacity="0.5" filter="url(#wb)"/><path d="M-20 180 H730 V112 C620 132 470 150 300 164Z" fill="#000814" opacity="0.3" filter="url(#wb)"/></svg></div>
<div class="a" style="left:1885px;top:823px;width:16px;height:16px;border-radius:3px;background:linear-gradient(#fff,#dcdcdc);border:1px solid #9aa"></div>
<div class="a" style="left:1212px;top:920px;width:12px;height:14px;background:#f8f8f8"></div>
<div class="a" style="left:1227px;top:920px;width:12px;height:14px;background:#cacaca"></div>
<div class="a" style="left:1243px;top:920px;width:12px;height:14px;background:#7a0a8a"></div>
<div class="a" style="left:1258px;top:920px;width:12px;height:14px;background:#5a80f0"></div>
<div class="a" style="left:1274px;top:920px;width:12px;height:14px;background:#80f040"></div>
<div class="a" style="left:1289px;top:920px;width:12px;height:14px;background:#f8f040"></div>
<div class="a" style="left:1305px;top:920px;width:12px;height:14px;background:#e08850"></div>
<div class="a" style="left:1320px;top:920px;width:12px;height:14px;background:#e02020"></div>
<div class="a" style="left:1354px;top:920px;width:12px;height:14px;background:#f8f8f8"></div>
<div class="a" style="left:1369px;top:920px;width:12px;height:14px;background:#cacaca"></div>
<div class="a" style="left:1385px;top:920px;width:12px;height:14px;background:#7a0a8a"></div>
<div class="a" style="left:1400px;top:920px;width:12px;height:14px;background:#5a80f0"></div>
<div class="a" style="left:1416px;top:920px;width:12px;height:14px;background:#80f040"></div>
<div class="a" style="left:1431px;top:920px;width:12px;height:14px;background:#f8f040"></div>
<div class="a" style="left:1447px;top:920px;width:12px;height:14px;background:#e08850"></div>
<div class="a" style="left:1462px;top:920px;width:12px;height:14px;background:#e02020"></div>
<svg class="a" style="left:0px;top:0px;overflow:visible" width="1939" height="1041" font-family="Liberation Sans, sans-serif"><text x="1205" y="813.1" font-size="11.3" fill="#fff" font-weight="bold" textLength="115.5" lengthAdjust="spacingAndGlyphs" >JoyScope Mx50 - 1.1</text><text x="1258.8" y="841.2" font-size="11" fill="#fff" font-weight="bold" textLength="41.5" lengthAdjust="spacingAndGlyphs" >PORT A</text><text x="1400.6" y="841.2" font-size="11" fill="#fff" font-weight="bold" textLength="40.5" lengthAdjust="spacingAndGlyphs" >PORT B</text><text x="1611" y="841.2" font-size="11" fill="#fff" font-weight="bold" textLength="110" lengthAdjust="spacingAndGlyphs" >SIGNAL GENERATOR</text><text x="1733" y="841.2" font-size="11" fill="#fff" font-weight="bold" textLength="59" lengthAdjust="spacingAndGlyphs" >DAQ MODE</text><text x="1832.7" y="841.2" font-size="11" fill="#fff" font-weight="bold" textLength="44.5" lengthAdjust="spacingAndGlyphs" >STATUS</text><text x="1893" y="835" font-size="10" fill="#333" text-anchor="middle" >?</text><text x="1212" y="875.2" font-size="8.2" fill="#c8d0dc" font-weight="bold" textLength="21.5" lengthAdjust="spacingAndGlyphs" >Mode</text><text x="1211.7" y="896.1" font-size="12" fill="#fff" textLength="54" lengthAdjust="spacingAndGlyphs" >ANALYZER</text><text x="1218" y="931.5" font-size="11" fill="#111" text-anchor="middle" >0</text><text x="1233" y="931.5" font-size="11" fill="#1a1a1a" text-anchor="middle" >1</text><text x="1249" y="931.5" font-size="11" fill="#4a0860" text-anchor="middle" >2</text><text x="1264" y="931.5" font-size="11" fill="#101c70" text-anchor="middle" >3</text><text x="1280" y="931.5" font-size="11" fill="#102008" text-anchor="middle" >4</text><text x="1295" y="931.5" font-size="11" fill="#151500" text-anchor="middle" >5</text><text x="1311" y="931.5" font-size="11" fill="#1a0a00" text-anchor="middle" >6</text><text x="1326" y="931.5" font-size="11" fill="#300000" text-anchor="middle" >7</text><text x="1354" y="875.2" font-size="8.2" fill="#c8d0dc" font-weight="bold" textLength="21.5" lengthAdjust="spacingAndGlyphs" >Mode</text><text x="1353.7" y="896.1" font-size="12" fill="#fff" textLength="54" lengthAdjust="spacingAndGlyphs" >ANALYZER</text><text x="1360" y="931.5" font-size="11" fill="#111" text-anchor="middle" >0</text><text x="1375" y="931.5" font-size="11" fill="#1a1a1a" text-anchor="middle" >1</text><text x="1391" y="931.5" font-size="11" fill="#4a0860" text-anchor="middle" >2</text><text x="1406" y="931.5" font-size="11" fill="#101c70" text-anchor="middle" >3</text><text x="1422" y="931.5" font-size="11" fill="#102008" text-anchor="middle" >4</text><text x="1437" y="931.5" font-size="11" fill="#151500" text-anchor="middle" >5</text><text x="1453" y="931.5" font-size="11" fill="#1a0a00" text-anchor="middle" >6</text><text x="1468" y="931.5" font-size="11" fill="#300000" text-anchor="middle" >7</text></svg>
<div class="a" style="left:1476px;top:828px;width:130px;height:16px;overflow:hidden"><svg class="a" style="left:0px;top:0px;overflow:visible" width="130" height="16" font-family="Liberation Sans, sans-serif"><text x="-3.8" y="13.200000000000045" font-size="11" fill="#fff" font-weight="bold" textLength="128.7" lengthAdjust="spacingAndGlyphs" >SAMPLING FREQUENCY</text></svg></div>
<svg class="a" style="left:1480px;top:860px" width="120" height="100" viewBox="1480.0 860 120 100"><defs><radialGradient id="kh" cx="0.5" cy="0.5" r="0.5"><stop offset="0.55" stop-color="#0c1c34" stop-opacity="0.9"/><stop offset="1" stop-color="#0c1c34" stop-opacity="0"/></radialGradient></defs><circle cx="1537.5" cy="915" r="40" fill="url(#kh)"/><circle cx="1517.3" cy="935.2" r="2.4" fill="#5a88c8" opacity="0.3"/><circle cx="1517.3" cy="935.2" r="1.4" fill="#8eaed8"/><circle cx="1511.2" cy="925.9" r="2.4" fill="#5a88c8" opacity="0.3"/><circle cx="1511.2" cy="925.9" r="1.4" fill="#8eaed8"/><circle cx="1509.0" cy="915.0" r="2.4" fill="#5a88c8" opacity="0.3"/><circle cx="1509.0" cy="915.0" r="1.4" fill="#8eaed8"/><circle cx="1511.2" cy="904.1" r="2.4" fill="#5a88c8" opacity="0.3"/><circle cx="1511.2" cy="904.1" r="1.4" fill="#8eaed8"/><circle cx="1517.3" cy="894.8" r="2.4" fill="#5a88c8" opacity="0.3"/><circle cx="1517.3" cy="894.8" r="1.4" fill="#8eaed8"/><circle cx="1526.6" cy="888.7" r="2.4" fill="#5a88c8" opacity="0.3"/><circle cx="1526.6" cy="888.7" r="1.4" fill="#8eaed8"/><circle cx="1537.5" cy="886.5" r="2.4" fill="#5a88c8" opacity="0.3"/><circle cx="1537.5" cy="886.5" r="1.4" fill="#8eaed8"/><circle cx="1548.4" cy="888.7" r="2.4" fill="#5a88c8" opacity="0.3"/><circle cx="1548.4" cy="888.7" r="1.4" fill="#8eaed8"/><circle cx="1557.7" cy="894.8" r="2.4" fill="#5a88c8" opacity="0.3"/><circle cx="1557.7" cy="894.8" r="1.4" fill="#8eaed8"/><circle cx="1563.8" cy="904.1" r="2.4" fill="#5a88c8" opacity="0.3"/><circle cx="1563.8" cy="904.1" r="1.4" fill="#8eaed8"/><circle cx="1566.0" cy="915.0" r="2.4" fill="#5a88c8" opacity="0.3"/><circle cx="1566.0" cy="915.0" r="1.4" fill="#8eaed8"/><circle cx="1563.8" cy="925.9" r="2.4" fill="#5a88c8" opacity="0.3"/><circle cx="1563.8" cy="925.9" r="1.4" fill="#8eaed8"/><circle cx="1557.7" cy="935.2" r="2.4" fill="#5a88c8" opacity="0.3"/><circle cx="1557.7" cy="935.2" r="1.4" fill="#8eaed8"/><circle cx="1537.5" cy="915" r="26" fill="#0a1424" opacity="0.8"/><circle cx="1537.5" cy="915" r="24.3" fill="#c8ccd0"/><circle cx="1537.5" cy="915" r="23.2" fill="#7c8288"/></svg>
<div class="a" style="left:1515.5px;top:893px;width:44px;height:44px;border-radius:50%;background:conic-gradient(from 0deg, #f4f6f8, #a8acb0 12%, #e8eaec 22%, #9ca0a4 35%, #f0f2f4 47%, #a0a4a8 60%, #e6e8ea 72%, #989ca0 85%, #f4f6f8);box-shadow:inset 0 0 2px rgba(0,0,0,0.45)"></div>
<div class="a" style="left:1515.5px;top:893px;width:44px;height:44px;border-radius:50%;background:radial-gradient(circle at 50% 45%,rgba(255,255,255,0.35),rgba(255,255,255,0) 40%,rgba(0,0,0,0.15) 100%)"></div>
<div class="a" style="left:1543.5px;top:914px;width:13px;height:2px;background:#9cc4ee;box-shadow:0 0 2px #6a9ad8"></div>
<div class="a" style="left:1648px;top:869px;width:44px;height:21px;background:linear-gradient(#fcfcfc,#e6e6e6);border:1px solid #a0a0a0"></div>
<div class="a" style="left:1674px;top:871px;width:1px;height:17px;background:#c8c8c8"></div>
<svg class="a" style="left:1678px;top:877px" width="9" height="6"><path d="M1.5 1H7.5L4.5 4.5Z" fill="#111"/></svg>
<div class="a" style="left:1648px;top:893px;width:44px;height:21px;background:linear-gradient(#fcfcfc,#e6e6e6);border:1px solid #a0a0a0"></div>
<div class="a" style="left:1674px;top:895px;width:1px;height:17px;background:#c8c8c8"></div>
<svg class="a" style="left:1678px;top:901px" width="9" height="6"><path d="M1.5 1H7.5L4.5 4.5Z" fill="#111"/></svg>
<div class="a" style="left:1648px;top:918px;width:44px;height:21px;background:#fff;border:1px solid #a0a0a0"></div>
<div class="a" style="left:1649px;top:943px;width:42px;height:18px;border:1px solid #9a9a9a;border-radius:3px;background:linear-gradient(#e0e0e0,#c8c8c8)"></div>
<div class="a" style="left:1733px;top:881px;width:64px;height:22px;border:1px solid #b0b0b0;border-radius:3px;background:linear-gradient(#fdfdfd,#e4e4e4)"></div>
<div class="a" style="left:1733px;top:913px;width:64px;height:22px;border:1px solid #a0a0a0;border-radius:3px;background:linear-gradient(#dadada,#c6c6c6)"></div>
<svg class="a" style="left:0px;top:0px;overflow:visible" width="1939" height="1041" font-family="Liberation Sans, sans-serif"><text x="1537.4" y="880.6" font-size="10" fill="#f0f0f0" >3</text><text x="1502.4" y="890.3" font-size="10" fill="#f0f0f0" textLength="14.8" lengthAdjust="spacingAndGlyphs" >750</text><text x="1561.3" y="894.2" font-size="10" fill="#f0f0f0" textLength="9.4" lengthAdjust="spacingAndGlyphs" >12</text><text x="1486.6" y="917.1" font-size="10" fill="#f0f0f0" textLength="14.6" lengthAdjust="spacingAndGlyphs" >300</text><text x="1570.4" y="916.7" font-size="10" fill="#f0f0f0" textLength="10" lengthAdjust="spacingAndGlyphs" >24</text><text x="1497.4" y="945.1" font-size="10" fill="#f0f0f0" textLength="14" lengthAdjust="spacingAndGlyphs" >120</text><text x="1560.8" y="945" font-size="10" fill="#f0f0f0" textLength="9.4" lengthAdjust="spacingAndGlyphs" >48</text><text x="1564" y="880" font-size="8.5" fill="#8aa8e0" font-weight="bold" textLength="24" lengthAdjust="spacingAndGlyphs" >Buffer</text><text x="1523.3" y="954.8" font-size="10" fill="#88b4ec" textLength="29.2" lengthAdjust="spacingAndGlyphs" >24MHz</text><text x="1613.3" y="882.3" font-size="11.5" fill="#fff" textLength="28" lengthAdjust="spacingAndGlyphs" >Signal</text><text x="1614.3" y="906.5" font-size="11.5" fill="#fff" textLength="26.5" lengthAdjust="spacingAndGlyphs" >Ampl.</text><text x="1615" y="930.4" font-size="11.5" fill="#fff" textLength="25.7" lengthAdjust="spacingAndGlyphs" >Freq.</text><text x="1652.2" y="883.8" font-size="11.5" fill="#1a1a1a" textLength="20" lengthAdjust="spacingAndGlyphs" >Sine</text><text x="1652.2" y="907.8" font-size="11.5" fill="#1a1a1a" textLength="16.5" lengthAdjust="spacingAndGlyphs" >100</text><text x="1666.3" y="931.9" font-size="11.5" fill="#1a1a1a" textLength="22" lengthAdjust="spacingAndGlyphs" >60,0</text><text x="1694.5" y="906.5" font-size="11" fill="#fff" textLength="10" lengthAdjust="spacingAndGlyphs" >%</text><text x="1693.4" y="930.4" font-size="11" fill="#fff" textLength="12" lengthAdjust="spacingAndGlyphs" >Hz</text><text x="1658.3" y="957.4" font-size="11.5" fill="#1a1a1a" textLength="22" lengthAdjust="spacingAndGlyphs" >Stop</text><text x="1745" y="896.8" font-size="11" fill="#1a1a1a" textLength="40.2" lengthAdjust="spacingAndGlyphs" >ANALOG</text><text x="1744.3" y="928.9" font-size="11" fill="#1a1a1a" textLength="39.4" lengthAdjust="spacingAndGlyphs" >DIGITAL</text><text x="1819" y="879" font-size="11.3" fill="#fff" font-weight="bold" textLength="60" lengthAdjust="spacingAndGlyphs" >Connected</text><text x="1819" y="897.9" font-size="11" fill="#fff" textLength="53.5" lengthAdjust="spacingAndGlyphs" >S/N: 30316</text><text x="1819" y="914.8" font-size="11" fill="#fff" textLength="44.5" lengthAdjust="spacingAndGlyphs" >FW: 1.18</text></svg>
</body></html>
